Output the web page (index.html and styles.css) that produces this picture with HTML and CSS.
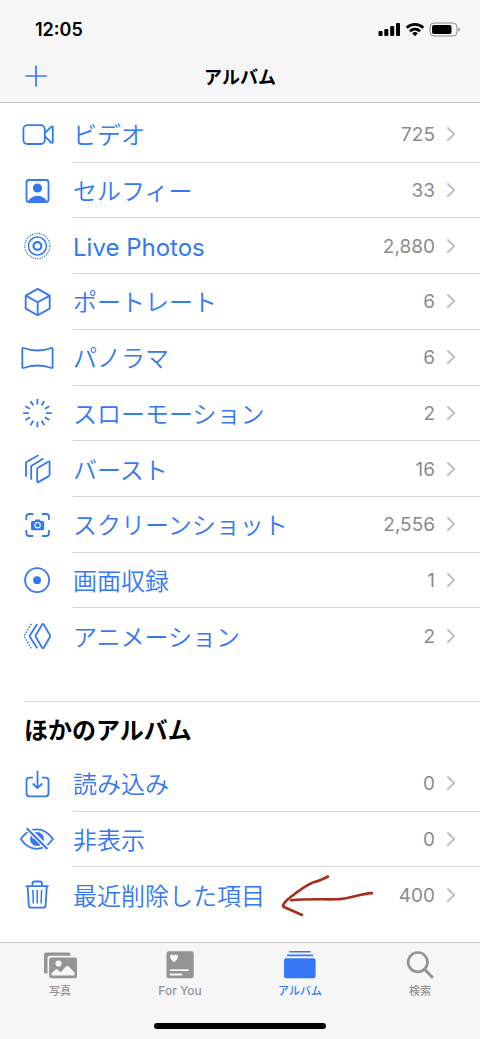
FILE: index.html
```html
<!DOCTYPE html>
<html lang="ja">
<head>
<meta charset="utf-8">
<meta name="viewport" content="width=device-width, initial-scale=1">
<title>アルバム</title>
<link rel="stylesheet" href="styles.css">
</head>
<body>
<svg class="defs" aria-hidden="true">
  <symbol id="chevron" viewBox="0 0 10 16"><path d="M2 2l6.200 6L2 14" fill="none" stroke="currentColor" stroke-width="2" stroke-linecap="round" stroke-linejoin="round"/></symbol>
</svg>
<header class="top">
  <div class="status">
    <span class="time">12:05</span>
    <svg class="indicators" viewBox="0 0 84 16" aria-hidden="true">
      <rect x="1.500" y="10" width="4" height="5" rx="1"/>
      <rect x="7.300" y="8" width="4" height="7" rx="1"/>
      <rect x="13.200" y="5" width="4" height="10" rx="1"/>
      <rect x="19" y="2" width="4" height="13" rx="1"/>
      <g fill="none" stroke="#000" stroke-width="2.600"><path d="M29.700 6.700a12 12 0 0 1 16.600 0"/><path d="M32.900 10.200a7.400 7.400 0 0 1 10.200 0"/></g>
      <path d="M35.200 12.300a4 4 0 0 1 5.600 0L38 15.200z"/>
      <rect x="53" y="2" width="27" height="13" rx="4" fill="none" stroke="#8c8c8c"/>
      <rect x="55" y="4" width="19.500" height="9" rx="2"/>
      <path d="M81.500 6.300c2 .9 2 3.500 0 4.400z" fill="#8c8c8c"/>
    </svg>
  </div>
  <div class="nav">
    <button class="add" type="button" aria-label="追加"><svg viewBox="0 0 22 22"><path d="M11 1v20M1 11h20" stroke="currentColor" stroke-width="1.700" stroke-linecap="round"/></svg></button>
    <h1>アルバム</h1>
  </div>
</header>

<main>
  <nav class="list media" aria-label="メディアタイプ">
    <a class="row" href="#video"><svg class="icon" viewBox="0 0 36 36"><rect x="4.400" y="8.200" width="21.400" height="18.800" rx="4"/><path d="M26 15.800l6.200-5.900q1.600-1.200 1.600.8v14q0 2-1.600.8L26 19.400"/></svg><span class="cell"><span class="name">ビデオ</span><span class="count">725</span><svg class="go"><use href="#chevron"/></svg></span></a>
    <a class="row" href="#selfie"><svg class="icon" viewBox="0 0 36 36"><rect x="7.500" y="7" width="22" height="22" rx="2.500"/><circle class="solid" cx="18.500" cy="15" r="4.600"/><path class="solid" d="M9 28.500c3-7.500 16-7.500 19 0z"/></svg><span class="cell"><span class="name">セルフィー</span><span class="count">33</span><svg class="go"><use href="#chevron"/></svg></span></a>
    <a class="row" href="#live"><svg class="icon" viewBox="0 0 36 36"><circle cx="18.400" cy="18" r="12.600" stroke-width="1.300" stroke-dasharray="1.200 1.130"/><circle cx="18.400" cy="18" r="9" stroke-width="1.500"/><circle cx="18.400" cy="18" r="3.900" stroke-width="2.200"/></svg><span class="cell"><span class="name latin">Live Photos</span><span class="count">2,880</span><svg class="go"><use href="#chevron"/></svg></span></a>
    <a class="row" href="#portrait"><svg class="icon" viewBox="0 0 36 36"><path d="M18.700 4.900l12 6.700v13L18.700 31.200l-12-6.600v-13zM6.700 11.600l12 6.700 12-6.700M18.700 18.300v12.900"/></svg><span class="cell"><span class="name">ポートレート</span><span class="count">6</span><svg class="go"><use href="#chevron"/></svg></span></a>
    <a class="row" href="#panorama"><svg class="icon" viewBox="0 0 36 36"><path d="M4.500 8q14 5 28 0 1.100-.3 1.100 1v18q0 1.300-1.100 1-14-5-28 0-1.200.3-1.200-1V9q0-1.300 1.200-1z"/></svg><span class="cell"><span class="name">パノラマ</span><span class="count">6</span><svg class="go"><use href="#chevron"/></svg></span></a>
    <a class="row" href="#slow"><svg class="icon" viewBox="0 0 36 36"><path d="M18.400 3.900v5.600M18.400 26.700v5.600M4.200 18.100h5.600M27 18.100h5.600M11.600 6l2.600 4.500M22.600 25.700l2.600 4.500M6.400 11.200l4.500 2.600M25.900 22.400l4.500 2.600M6.400 25l4.500-2.600M25.900 13.800l4.500-2.600M11.600 30.200l2.600-4.500M22.600 10.500L25.200 6"/></svg><span class="cell"><span class="name">スローモーション</span><span class="count">2</span><svg class="go"><use href="#chevron"/></svg></span></a>
    <a class="row" href="#burst"><svg class="icon" viewBox="0 0 36 36"><path d="M7 25.700V11.200L19.500 4.300M12.200 28.800V14.900L24.500 7.500M18.200 18.200q0-.9.800-1.400l10.600-6.300q1-.5 1 .6v12.600q0 .9-.8 1.400l-10.600 6q-1 .5-1-.6z"/></svg><span class="cell"><span class="name">バースト</span><span class="count">16</span><svg class="go"><use href="#chevron"/></svg></span></a>
    <a class="row" href="#screenshot"><svg class="icon" viewBox="0 0 36 36"><path d="M7.300 13v-3q0-3 3-3h4M23 7h4q3 0 3 3v3M30 23v3q0 3-3 3h-4M14.300 29h-4q-3 0-3-3v-3"/><path class="solid" d="M13.500 14h1.800l1.200-1.500h4.200l1.200 1.500h1.800q1.500 0 1.500 1.500v6.200q0 1.500-1.500 1.500H13.500q-1.500 0-1.500-1.500v-6.200q0-1.500 1.500-1.500z"/><circle cx="18.600" cy="18.200" r="2.700" stroke="#fff" stroke-width="1.100"/></svg><span class="cell"><span class="name">スクリーンショット</span><span class="count">2,556</span><svg class="go"><use href="#chevron"/></svg></span></a>
    <a class="row" href="#recording"><svg class="icon" viewBox="0 0 36 36"><circle cx="18.100" cy="18.200" r="12"/><circle class="solid" cx="18.100" cy="18.200" r="3.900"/></svg><span class="cell"><span class="name">画面収録</span><span class="count">1</span><svg class="go"><use href="#chevron"/></svg></span></a>
    <a class="row" href="#animation"><svg class="icon" viewBox="0 0 36 36"><path d="M23.100 6.500q.8-1.200 1.600 0l6.300 10.700q.5.900 0 1.800l-6.300 10.700q-.8 1.200-1.600 0L16.800 19q-.5-.9 0-1.800zM18.200 5.900L11 17.200q-.6.900 0 1.800l7.200 11.300"/><path d="M12.200 5.900L5 18.100l7.200 12.200" stroke-width="1.500" stroke-dasharray="1.500 1.500"/></svg><span class="cell"><span class="name">アニメーション</span><span class="count">2</span><svg class="go"><use href="#chevron"/></svg></span></a>
  </nav>

  <section class="others">
    <h2>ほかのアルバム</h2>
    <nav class="list" aria-label="ほかのアルバム">
      <a class="row" href="#imports"><svg class="icon" viewBox="0 0 36 36"><path d="M14 11.700h-3.500q-3 0-3 3v12.600q0 3 3 3h16q3 0 3-3V14.700q0-3-3-3H23M18.500 4.800v17M13.800 17.500l4.700 4.600 4.700-4.600"/></svg><span class="cell"><span class="name">読み込み</span><span class="count">0</span><svg class="go"><use href="#chevron"/></svg></span></a>
      <a class="row" href="#hidden"><svg class="icon" viewBox="0 0 36 36"><path d="M1.800 18Q8.500 8.400 17.700 8.400T34 18Q27 27.800 17.700 27.800T1.800 18z"/><circle class="solid" cx="18" cy="18" r="7"/><path d="M13.200 17.200a5 5 0 0 1 2.600-3.600" stroke="#fff" stroke-width="1.200"/><path d="M8.200 7.300l21 21" stroke="#fff" stroke-width="5"/><path d="M7.700 7.300l20.700 20.700" stroke-width="2"/></svg><span class="cell"><span class="name">非表示</span><span class="count">0</span><svg class="go"><use href="#chevron"/></svg></span></a>
      <a class="row" href="#deleted"><svg class="icon" viewBox="0 0 36 36"><path d="M6.700 9.200h23M13.500 9V6.300q0-1.800 1.800-1.800h5.800q1.800 0 1.800 1.800V9M8.600 9.400l1.200 19q.2 2.300 2.400 2.300h12q2.200 0 2.400-2.300l1.200-19"/><path d="M13.800 13l.5 13.500M18.200 13v13.500M22.600 13l-.5 13.500" stroke-width="1.500"/></svg><span class="cell"><span class="name">最近削除した項目</span><svg class="arrow" viewBox="0 0 96 46" aria-hidden="true"><path d="M48 5.500C43 8 40 10 33 11.500 24 15 12 25 8 28q-5 5-5 7l1 1 18 8M11 29.300c15-1.500 30-.8 45-1 14 0 22-5.500 36-6.200"/></svg><span class="count">400</span><svg class="go"><use href="#chevron"/></svg></span></a>
    </nav>
  </section>
</main>

<footer class="bottom">
  <nav class="tabs" aria-label="タブ">
    <a class="tab" href="#photos"><svg viewBox="0 0 36 30"><path d="M4 2.500h23q1.500 0 1.500 1.500v1.800H8Q5.500 5.800 5.500 8.500v15H3.500q-1.500 0-1.500-1.500V4.500q0-2 2-2z"/><rect x="7.200" y="7.500" width="27.800" height="20.800" rx="2"/><circle class="cut" cx="16.500" cy="13.500" r="3.100"/><path class="cut" d="M9.500 25.500v-2.200l4-3.800q1-.8 2 0l3.300 2.800 5.300-6q1.200-1 2.400 0l6 6.200v3z"/></svg><span>写真</span></a>
    <a class="tab" href="#foryou"><svg viewBox="0 0 36 30"><rect x="4.500" y="1.300" width="27.200" height="27" rx="2.500"/><path class="cut" d="M12 12.200Q8 9.200 8 6.800 8 4.500 10 4.500q1.400 0 2 1.300Q12.600 4.500 14 4.500q2 0 2 2.300 0 2.400-4 5.400z"/><path class="line" d="M8.500 20.200h17.500M8.500 24.500h11"/></svg><span class="wide">For You</span></a>
    <a class="tab active" href="#albums" aria-current="page"><svg viewBox="0 0 36 30"><path d="M7.200 1h21.400v1.400H7.200zM5 4.500h26v1.700H5z"/><rect x="2" y="8.200" width="31.600" height="20" rx="2"/></svg><span>アルバム</span></a>
    <a class="tab" href="#search"><svg viewBox="0 0 36 30"><circle cx="15.800" cy="12.200" r="9.700" fill="none" stroke="currentColor" stroke-width="2.700"/><path d="M22.800 19.500l7.200 7.500" stroke="currentColor" stroke-width="3" stroke-linecap="round"/></svg><span>検索</span></a>
  </nav>
  <div class="home"></div>
</footer>
</body>
</html>
```
FILE: styles.css
```css
* {
  box-sizing: border-box;
}

body {
  margin: 0;
  min-height: 100vh;
  display: flex;
  flex-direction: column;
  background: #fff;
  color: #000;
  font-family: Inter, "Noto Sans CJK JP", sans-serif;
}

a {
  color: inherit;
  text-decoration: none;
}

svg {
  display: block;
  flex: none;
}

h1,
h2 {
  margin: 0;
  font-weight: 700;
}

.defs {
  display: none;
}

.top {
  background: #f6f6f6;
  border-bottom: 1px solid #c6c6c8;
}

.status {
  display: flex;
  justify-content: space-between;
  align-items: center;
  height: 50px;
  padding: 8px 19px 0 35px;
}

.time {
  font-size: 18px;
  font-weight: 600;
}

.indicators {
  width: 84px;
  height: 16px;
}

.nav {
  display: grid;
  grid-template-columns: 1fr auto 1fr;
  align-items: center;
  height: 52px;
  padding: 0 25px;
}

.nav h1 {
  padding-top: 3px;
  font-size: 18px;
  line-height: 24px;
}

.add {
  justify-self: start;
  padding: 0;
  border: 0;
  background: none;
  color: #3478f6;
}

.add svg {
  width: 22px;
  height: 22px;
}

main {
  flex: 1;
  padding-top: 4px;
}

.list {
  display: grid;
  grid-auto-rows: 1fr;
  min-height: 167px;
}

.media {
  min-height: 557px;
}

.row {
  display: flex;
  align-items: stretch;
  gap: 18px;
  padding-left: 19px;
  color: #3478f6;
}

.icon {
  width: 36px;
  height: 36px;
  align-self: center;
  fill: none;
  stroke: currentColor;
  stroke-width: 1.8;
  stroke-linejoin: round;
}

.icon .solid {
  fill: currentColor;
  stroke: none;
}

.cell {
  flex: 1;
  display: flex;
  align-items: center;
  position: relative;
  padding-right: 24px;
  border-bottom: 1px solid #d8d8da;
}

.row:last-child .cell {
  border-bottom-color: transparent;
}

.name {
  padding-top: 4px;
  font-size: 24px;
  font-weight: 350;
  line-height: 32px;
}

.latin {
  font-weight: 400;
}

.count {
  margin-left: auto;
  padding-top: 2px;
  color: #8a8a8e;
  font-size: 19px;
  line-height: 32px;
}

.go {
  width: 10px;
  height: 16px;
  margin-left: 11px;
  color: #c0c0c3;
}

.arrow {
  position: absolute;
  left: 207px;
  top: 4px;
  width: 96px;
  height: 46px;
  fill: none;
  stroke: #a92d1c;
  stroke-width: 2.6;
  stroke-linecap: round;
  stroke-linejoin: round;
}

.others {
  margin-top: 37px;
}

.others h2 {
  margin-left: 24px;
  padding: 11px 0 7px;
  border-top: 1px solid #d8d8da;
  font-size: 24px;
  line-height: 36px;
}

.bottom {
  display: flex;
  flex-direction: column;
  align-items: center;
  gap: 24px;
  padding: 7px 0 10px;
  background: #f6f6f6;
  border-top: 1px solid #c6c6c8;
}

.tabs {
  display: grid;
  grid-template-columns: repeat(4, 1fr);
  width: 100%;
}

.tab {
  display: flex;
  flex-direction: column;
  align-items: center;
  gap: 3px;
  color: #949494;
  font-size: 11px;
  font-weight: 500;
  line-height: 16px;
}

.tab svg {
  width: 36px;
  height: 30px;
  fill: currentColor;
}

.tab .cut {
  fill: #f6f6f6;
}

.tab .line {
  stroke: #f6f6f6;
  stroke-width: 1.8;
  stroke-linecap: round;
}

.tab .wide {
  font-size: 12px;
}

.active {
  color: #3478f6;
}

.home {
  width: 172px;
  height: 6px;
  border-radius: 3px;
  background: #000;
}
```
